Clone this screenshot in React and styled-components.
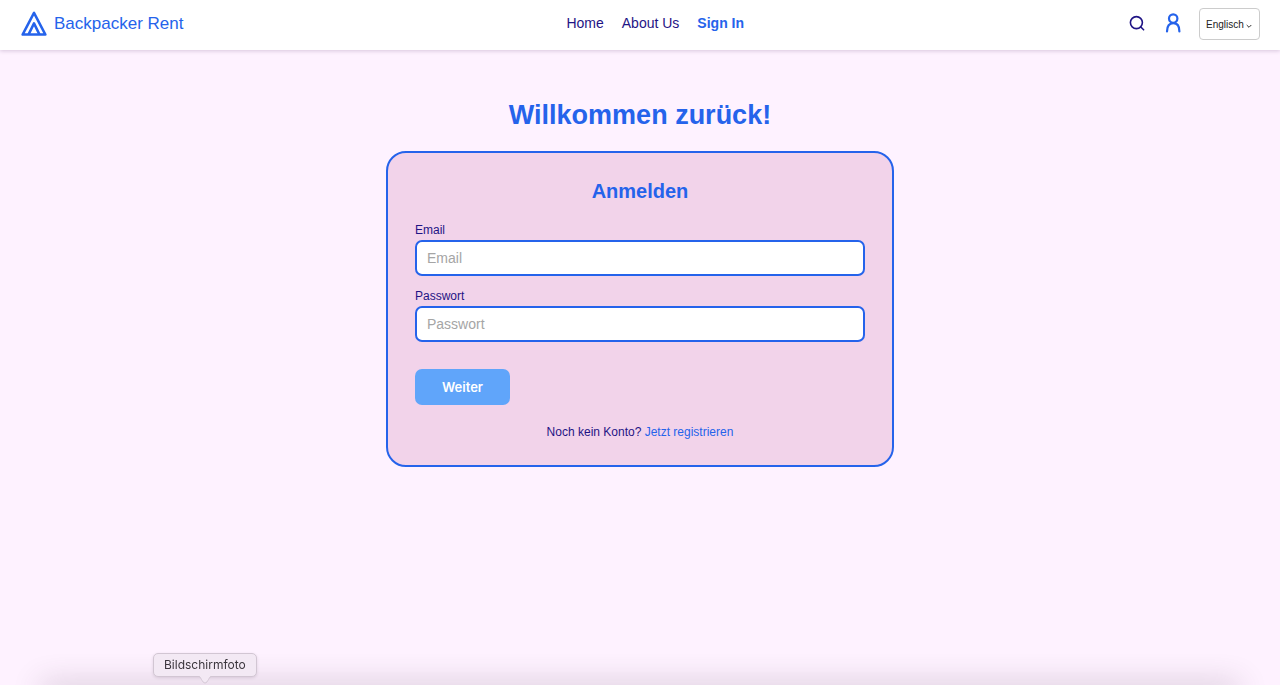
import React from 'react';
import styled, { createGlobalStyle } from 'styled-components';

const GlobalStyle = createGlobalStyle`
  *, *::before, *::after { box-sizing: border-box; }
  body {
    margin: 0;
    background: #fef2ff;
    color: #1f1485;
    font-family: "Liberation Sans", Arial, Helvetica, sans-serif;
    overflow-x: hidden;
  }
`;

const Header = styled.header`
  display: flex;
  justify-content: space-between;
  align-items: center;
  padding: 8px 20px 10px;
  background: #ffffff;
  box-shadow: 0 1px 4px rgba(60, 20, 80, 0.2);
`;

const Brand = styled.a`
  display: flex;
  align-items: center;
  gap: 6px;
  color: #2563eb;
  font-size: 17px;
  line-height: 28px;
  text-decoration: none;
`;

const Nav = styled.nav`
  display: flex;
  gap: 18px;
  padding-bottom: 2px;
`;

const NavLink = styled.a`
  color: ${({ $active }) => ($active ? '#2563eb' : '#1f1485')};
  font-size: 14px;
  font-weight: ${({ $active }) => ($active ? 700 : 400)};
  line-height: 20px;
  text-decoration: none;
`;

const Tools = styled.div`
  display: flex;
  align-items: center;
  gap: 16px;
`;

const IconButton = styled.button`
  display: flex;
  padding: 0;
  border: 0;
  background: none;
  color: ${({ $accent }) => ($accent ? '#2563eb' : '#1f1485')};
  cursor: pointer;
`;

const SelectBox = styled.div`
  position: relative;
  display: flex;
`;

const Select = styled.select`
  appearance: none;
  height: 32px;
  padding: 0 15px 0 6px;
  border: 1px solid #cccccc;
  border-radius: 4px;
  background: #ffffff;
  color: #222222;
  font-family: inherit;
  font-size: 10px;
`;

const Chevron = styled.svg`
  position: absolute;
  top: 15px;
  right: 8px;
  pointer-events: none;
`;

const Main = styled.main`
  display: flex;
  flex-direction: column;
  align-items: center;
  gap: 20px;
  padding: 49px 20px 20px;
`;

const PageTitle = styled.h1`
  margin: 0;
  color: #2563eb;
  font-size: 27px;
  line-height: 32px;
`;

const Card = styled.form`
  display: flex;
  flex-direction: column;
  width: 100%;
  max-width: 508px;
  padding: 25px 27px;
  border: 2px solid #2563eb;
  border-radius: 20px;
  background: #f2d3ea;
`;

const CardTitle = styled.h2`
  margin: 0 0 18px;
  color: #2563eb;
  font-size: 20px;
  line-height: 26px;
  text-align: center;
`;

const Field = styled.div`
  display: flex;
  flex-direction: column;
  gap: 2px;
  margin-bottom: 12px;
`;

const Label = styled.label`
  font-size: 12px;
  line-height: 16px;
`;

const Input = styled.input`
  height: 36px;
  padding: 0 10px;
  border: 2px solid #2563eb;
  border-radius: 7px;
  background: #ffffff;
  color: #1f1485;
  font-family: inherit;
  font-size: 14px;

  &::placeholder { color: #a5a5a5; }
`;

const SubmitButton = styled.button`
  align-self: flex-start;
  height: 36px;
  margin: 15px 0 19px;
  padding: 0 27px;
  border: 0;
  border-radius: 7px;
  background: #60a5fa;
  color: #ffffff;
  font-family: Inter, sans-serif;
  font-size: 13px;
  font-weight: 600;
  cursor: pointer;
`;

const Hint = styled.p`
  margin: 0;
  font-size: 12px;
  line-height: 16px;
  text-align: center;

  a { color: #2563eb; text-decoration: none; }
`;

const DockShade = styled.div`
  position: fixed;
  right: 40px;
  bottom: -12px;
  left: 40px;
  height: 12px;
  border-radius: 12px;
  box-shadow: 0 0 30px rgba(70, 50, 70, 0.32);
  pointer-events: none;
`;

const Tooltip = styled.div`
  position: fixed;
  bottom: 8px;
  left: 153px;
  padding: 3px 10px;
  border: 1px solid #d2c6d3;
  border-radius: 5px;
  background: #f3e9f4;
  box-shadow: 0 1px 3px rgba(70, 50, 70, 0.15);
  color: #3b363d;
  font-family: Inter, sans-serif;
  font-size: 12px;
  line-height: 16px;
`;

const TooltipTail = styled.svg`
  position: absolute;
  top: 100%;
  left: 50%;
  transform: translateX(-50%);
`;

function LogoIcon() {
  return (
    <svg width="28" height="28" viewBox="0 0 28 28" fill="none" stroke="currentColor" strokeWidth="2.5" strokeLinejoin="round" aria-hidden="true">
      <path d="M14 2.8 2.6 24.6h22.8z" />
      <path d="M8.6 24.4 14 13.4l5.4 11" />
    </svg>
  );
}

function SearchIcon() {
  return (
    <svg width="20" height="20" viewBox="0 0 20 20" fill="none" stroke="currentColor" strokeWidth="1.6" strokeLinecap="round" aria-hidden="true">
      <circle cx="9.4" cy="8.6" r="6" />
      <path d="m13.8 13 2.8 2.8" />
    </svg>
  );
}

function UserIcon() {
  return (
    <svg width="20" height="22" viewBox="0 0 20 22" fill="none" stroke="currentColor" strokeWidth="2.2" strokeLinecap="round" aria-hidden="true">
      <circle cx="10.2" cy="5.6" r="4.2" />
      <path d="M4 18.4C4 13 6.3 10.2 10.2 10.2s6.2 2.8 6.2 8.2" />
    </svg>
  );
}

export default function App() {
  return (
    <>
      <GlobalStyle />
      <Header>
        <Brand href="#">
          <LogoIcon />
          Backpacker Rent
        </Brand>
        <Nav>
          <NavLink href="#">Home</NavLink>
          <NavLink href="#">About Us</NavLink>
          <NavLink href="#" $active>Sign In</NavLink>
        </Nav>
        <Tools>
          <IconButton type="button" aria-label="Search"><SearchIcon /></IconButton>
          <IconButton type="button" aria-label="Account" $accent><UserIcon /></IconButton>
          <SelectBox>
            <Select aria-label="Language" defaultValue="en">
              <option value="en">Englisch</option>
            </Select>
            <Chevron width="6" height="6" viewBox="0 0 6 6" fill="none" stroke="#333333" strokeWidth="1">
              <path d="M.7 2 3 4.3 5.3 2" />
            </Chevron>
          </SelectBox>
        </Tools>
      </Header>
      <Main>
        <PageTitle>Willkommen zurück!</PageTitle>
        <Card onSubmit={(event) => event.preventDefault()}>
          <CardTitle>Anmelden</CardTitle>
          <Field>
            <Label htmlFor="email">Email</Label>
            <Input id="email" type="email" placeholder="Email" />
          </Field>
          <Field>
            <Label htmlFor="password">Passwort</Label>
            <Input id="password" type="password" placeholder="Passwort" />
          </Field>
          <SubmitButton type="submit">Weiter</SubmitButton>
          <Hint>
            Noch kein Konto? <a href="#">Jetzt registrieren</a>
          </Hint>
        </Card>
      </Main>
      <DockShade />
      <Tooltip role="tooltip">
        Bildschirmfoto
        <TooltipTail width="16" height="8" viewBox="0 0 16 8">
          <path d="M1 0c3 0 4 7 7 7s4-7 7-7" fill="#f3e9f4" stroke="#d2c6d3" />
        </TooltipTail>
      </Tooltip>
    </>
  );
}
